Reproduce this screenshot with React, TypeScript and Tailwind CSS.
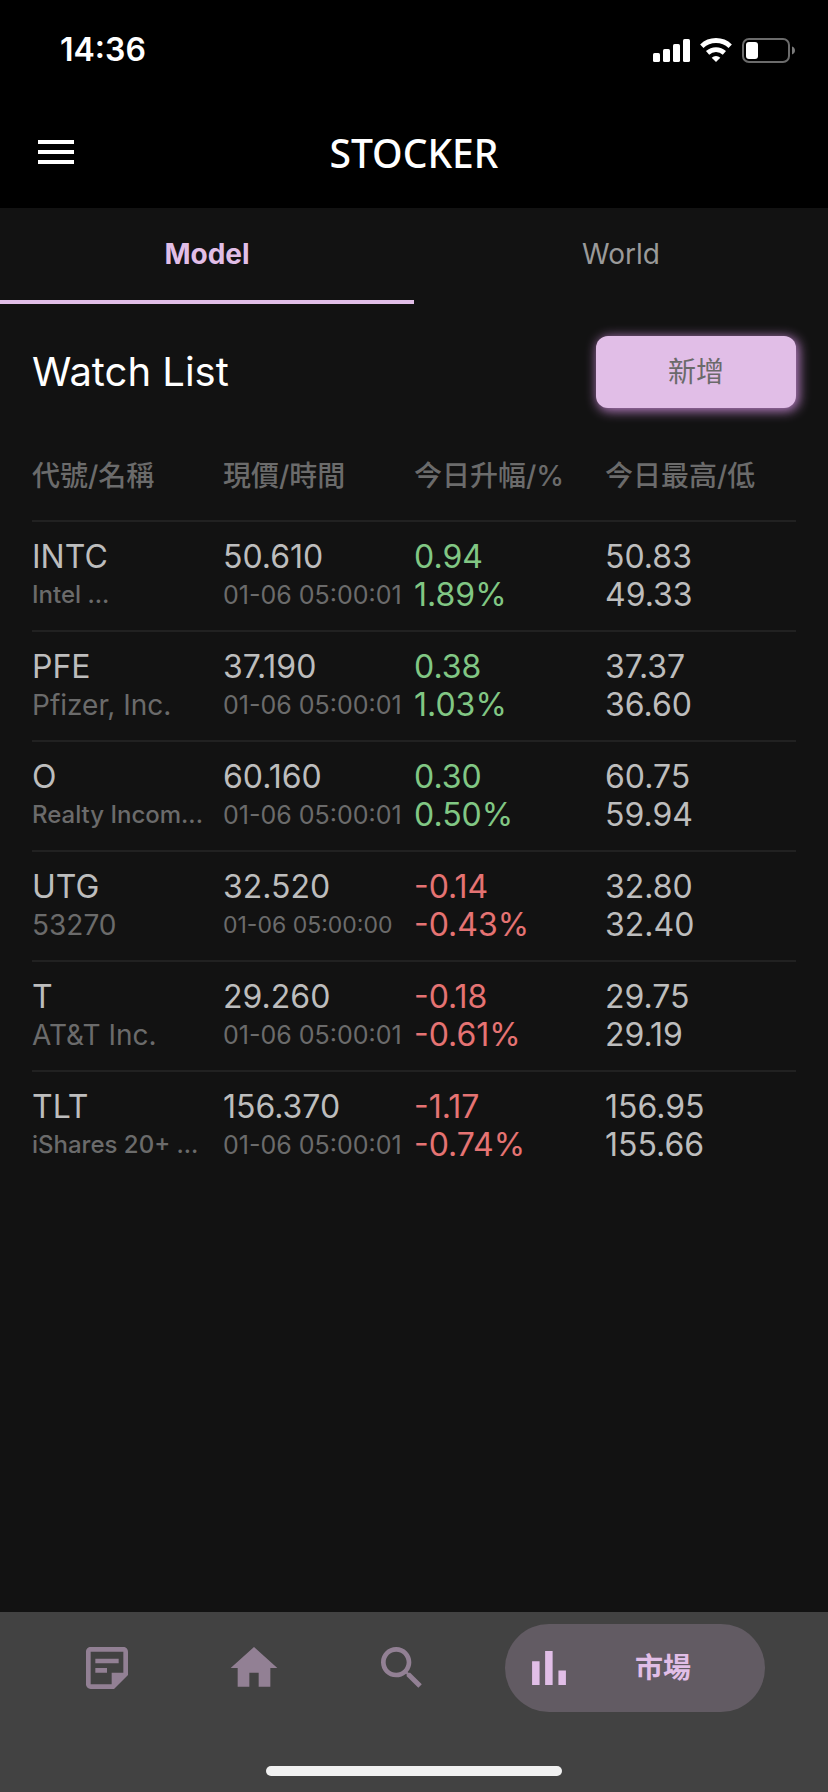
import React, { useState } from 'react';
import clsx from 'clsx';

interface Quote {
  symbol: string;
  name: string;
  nameClass: string;
  price: string;
  time: string;
  timeClass: string;
  change: string;
  percent: string;
  high: string;
  low: string;
}

const QUOTES: Quote[] = [
  {
    symbol: 'INTC',
    name: 'Intel ...',
    nameClass: 'text-2xl font-medium',
    price: '50.610',
    time: '01-06 05:00:01',
    timeClass: 'text-[25px]',
    change: '0.94',
    percent: '1.89%',
    high: '50.83',
    low: '49.33',
  },
  {
    symbol: 'PFE',
    name: 'Pfizer, Inc.',
    nameClass: 'text-[28px]',
    price: '37.190',
    time: '01-06 05:00:01',
    timeClass: 'text-[25px]',
    change: '0.38',
    percent: '1.03%',
    high: '37.37',
    low: '36.60',
  },
  {
    symbol: 'O',
    name: 'Realty Incom...',
    nameClass: 'text-2xl font-medium',
    price: '60.160',
    time: '01-06 05:00:01',
    timeClass: 'text-[25px]',
    change: '0.30',
    percent: '0.50%',
    high: '60.75',
    low: '59.94',
  },
  {
    symbol: 'UTG',
    name: '53270',
    nameClass: 'text-[28px]',
    price: '32.520',
    time: '01-06 05:00:00',
    timeClass: 'text-[23px]',
    change: '-0.14',
    percent: '-0.43%',
    high: '32.80',
    low: '32.40',
  },
  {
    symbol: 'T',
    name: 'AT&T Inc.',
    nameClass: 'text-[28px]',
    price: '29.260',
    time: '01-06 05:00:01',
    timeClass: 'text-[25px]',
    change: '-0.18',
    percent: '-0.61%',
    high: '29.75',
    low: '29.19',
  },
  {
    symbol: 'TLT',
    name: 'iShares 20+ ...',
    nameClass: 'text-2xl font-medium',
    price: '156.370',
    time: '01-06 05:00:01',
    timeClass: 'text-[25px]',
    change: '-1.17',
    percent: '-0.74%',
    high: '156.95',
    low: '155.66',
  },
];

const COLUMNS = ['代號/名稱', '現價/時間', '今日升幅/%', '今日最高/低'];
const TABS = ['Model', 'World'];

const NAV_ICONS = [
  {
    label: 'Notes',
    href: '#notes',
    path: 'M19 5v9h-5v5H5V5h14m0-2H5c-1.1 0-2 .9-2 2v14c0 1.1.9 2 2 2h10l6-6V5c0-1.1-.9-2-2-2zm-7 11H7v-2h5v2zm5-4H7V8h10v2z',
  },
  { label: 'Home', href: '#home', path: 'M10 20v-6h4v6h5v-8h3L12 3 2 12h3v8z' },
  {
    label: 'Search',
    href: '#search',
    path: 'M15.5 14h-.79l-.28-.27C15.41 12.59 16 11.11 16 9.5 16 5.91 13.09 3 9.5 3S3 5.91 3 9.5 5.91 16 9.5 16c1.61 0 3.09-.59 4.23-1.57l.27.28v.79l5 4.99L20.49 19l-4.99-5zm-6 0C7.01 14 5 11.99 5 9.5S7.01 5 9.5 5 14 7.01 14 9.5 11.99 14 9.5 14z',
  },
];

function StatusBar() {
  return (
    <div className="flex h-24 items-center justify-between pt-1 pr-[33px] pl-[60px]">
      <span className="text-[32px] leading-none font-semibold">14:36</span>
      <div className="flex items-center gap-[10px]">
        <svg width="37" height="23" viewBox="0 0 37 23" fill="currentColor" aria-hidden="true">
          <rect x="0" y="14" width="7" height="9" rx="1.6" />
          <rect x="10" y="10" width="7" height="13" rx="1.6" />
          <rect x="20" y="5" width="7" height="18" rx="1.6" />
          <rect x="30" y="0" width="7" height="23" rx="1.6" />
        </svg>
        <svg width="32" height="24" viewBox="0 0 32 24" aria-hidden="true">
          <g fill="none" stroke="currentColor" strokeWidth="4.8">
            <path d="M1.8 8.2a20.5 20.5 0 0 1 28.4 0" />
            <path d="M7.6 14.9a12.5 12.5 0 0 1 16.8 0" />
          </g>
          <path d="M16 24l-4.3-4.2a6.2 6.2 0 0 1 8.6 0z" fill="currentColor" />
        </svg>
        <svg width="53" height="25" viewBox="0 0 53 25" aria-hidden="true">
          <rect x="1" y="1" width="46" height="23" rx="6" fill="none" stroke="#6b6b6b" strokeWidth="2" />
          <rect x="4" y="4" width="12" height="17" rx="3" fill="currentColor" />
          <path d="M50 8.5c1.8.6 3 2.2 3 4s-1.2 3.4-3 4z" fill="#7a7a7a" />
        </svg>
      </div>
    </div>
  );
}

function AppBar() {
  return (
    <div className="grid h-28 grid-cols-[1fr_auto_1fr] items-center px-[38px]">
      <button type="button" aria-label="Menu" className="flex w-9 flex-col gap-[6px]">
        <span className="h-1 w-full bg-white" />
        <span className="h-1 w-full bg-white" />
        <span className="h-1 w-full bg-white" />
      </button>
      <h1 className="font-['Noto_Sans',sans-serif] text-[39px] leading-none font-medium">STOCKER</h1>
    </div>
  );
}

function QuoteRow({ quote }: { quote: Quote }) {
  const falling = quote.change.startsWith('-');
  const cell = 'border-t-2 border-[#212121] py-4';
  return (
    <tr>
      <td className={cell}>
        <div>{quote.symbol}</div>
        <div className={clsx('leading-[38px] text-[#6b6b6b]', quote.nameClass)}>{quote.name}</div>
      </td>
      <td className={cell}>
        <div>{quote.price}</div>
        <div className={clsx('leading-[38px] text-[#6b6b6b]', quote.timeClass)}>{quote.time}</div>
      </td>
      <td className={clsx(cell, falling ? 'text-[#e57373]' : 'text-[#81c784]')}>
        <div>{quote.change}</div>
        <div>{quote.percent}</div>
      </td>
      <td className={cell}>
        <div>{quote.high}</div>
        <div>{quote.low}</div>
      </td>
    </tr>
  );
}

function BottomNav() {
  return (
    <nav className="bg-[#424242]">
      <div className="flex items-center justify-between px-[63px] py-3">
        {NAV_ICONS.map((item) => (
          <a
            key={item.label}
            href={item.href}
            aria-label={item.label}
            className="flex size-[88px] items-center justify-center text-[#928094]"
          >
            <svg className="size-14" viewBox="0 0 24 24" fill="currentColor" aria-hidden="true">
              <path d={item.path} />
            </svg>
          </a>
        ))}
        <a href="#market" className="flex h-[88px] w-[260px] items-center rounded-full bg-[#625b63] text-[#e1bee7]">
          <span className="flex w-[88px] justify-center">
            <svg className="size-[58px]" viewBox="0 0 24 24" fill="currentColor" aria-hidden="true">
              <path d="M5 9.2h3.1V19H5zM10.4 5h3.1v14h-3.1zM15.9 13H19v6h-3.1z" />
            </svg>
          </span>
          <span className="flex-1 pr-8 text-center text-[28px] leading-none font-bold">市場</span>
        </a>
      </div>
      <div className="flex h-[68px] justify-center pt-[42px]">
        <div className="h-[10px] w-[296px] rounded-full bg-[#f1f1f1]" />
      </div>
    </nav>
  );
}

const App: React.FC = () => {
  const [tab, setTab] = useState('Model');

  return (
    <div className="flex min-h-screen flex-col bg-[#121212] font-[Inter,'Noto_Sans_CJK_TC',sans-serif] text-white">
      <header className="bg-black">
        <StatusBar />
        <AppBar />
      </header>

      <div role="tablist" className="grid grid-cols-2">
        {TABS.map((name) => (
          <button
            key={name}
            type="button"
            role="tab"
            aria-selected={tab === name}
            onClick={() => setTab(name)}
            className={clsx(
              'h-24 border-b-4 text-[28px]',
              tab === name ? 'border-[#e1bee7] font-bold text-[#e1bee7]' : 'border-transparent text-[#9a9a9a]',
            )}
          >
            {name}
          </button>
        ))}
      </div>

      <main className="flex-1 px-8 pt-8">
        <div className="mb-6 flex items-center justify-between">
          <h2 className="text-[40px] leading-none">Watch List</h2>
          <button
            type="button"
            className="h-[72px] w-[200px] rounded-xl bg-[#e1bee7] text-[28px] text-[#6a6a6a] shadow-[2px_2px_12px_1px_#ba80c6]"
          >
            新增
          </button>
        </div>

        <table className="w-full table-fixed border-separate border-spacing-0 text-left text-[32px] leading-[38px] whitespace-nowrap text-[#bdbdbd]">
          <thead>
            <tr className="h-[88px] text-[28px] text-[#6b6b6b]">
              {COLUMNS.map((column) => (
                <th key={column} scope="col" className="font-medium">
                  {column}
                </th>
              ))}
            </tr>
          </thead>
          <tbody>
            {QUOTES.map((quote) => (
              <QuoteRow key={quote.symbol} quote={quote} />
            ))}
          </tbody>
        </table>
      </main>

      <BottomNav />
    </div>
  );
};

export default App;
